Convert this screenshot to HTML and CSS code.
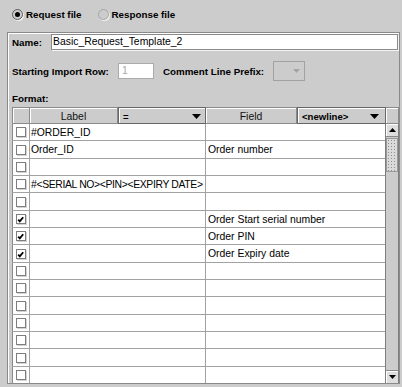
FILE: index.html
```html
<!DOCTYPE html>
<html lang="en">
<head>
    <meta charset="UTF-8">
    <title>Import Template</title>
    <link rel="stylesheet" href="styles.css">
</head>
<body>
    <div class="file-type">
        <label class="radio"><span class="radio-dot checked"></span>Request file</label>
        <label class="radio"><span class="radio-dot"></span>Response file</label>
    </div>

    <div class="panel">
        <div class="form-row name-row">
            <span class="field-label name-label">Name:</span>
            <div class="text-field name-field">Basic_Request_Template_2</div>
        </div>
        <div class="form-row import-row">
            <span class="field-label">Starting Import Row:</span>
            <div class="text-field row-field">1</div>
            <span class="field-label">Comment Line Prefix:</span>
            <div class="prefix-combo">
                <svg width="7" height="4" viewBox="0 0 7 4"><path d="M0 0h7L3.5 4z" fill="#a4a4a4"/></svg>
            </div>
        </div>
        <div class="field-label format-label">Format:</div>

        <div class="grid">
            <div class="grid-head">
                <div class="head-cell h-check"></div>
                <div class="head-cell h-label">Label</div>
                <div class="head-cell head-combo h-eq">
                    <span>=</span>
                    <svg width="9" height="5" viewBox="0 0 9 5"><path d="M0 0h9L4.5 5z"/></svg>
                </div>
                <div class="head-cell h-field">Field</div>
                <div class="head-cell head-combo h-nl">
                    <span>&lt;newline&gt;</span>
                    <svg width="9" height="5" viewBox="0 0 9 5"><path d="M0 0h9L4.5 5z"/></svg>
                </div>
                <div class="head-cell h-corner"></div>
            </div>

            <div class="grid-body">
                <div class="rows">
                    <div class="row">
                        <div class="cell check"><span class="box"></span></div>
                        <div class="cell label">#ORDER_ID</div>
                        <div class="cell field"></div>
                    </div>
                    <div class="row">
                        <div class="cell check"><span class="box"></span></div>
                        <div class="cell label">Order_ID</div>
                        <div class="cell field">Order number</div>
                    </div>
                    <div class="row">
                        <div class="cell check"><span class="box"></span></div>
                        <div class="cell label"></div>
                        <div class="cell field"></div>
                    </div>
                    <div class="row">
                        <div class="cell check"><span class="box"></span></div>
                        <div class="cell label tight">#&lt;SERIAL NO&gt;&lt;PIN&gt;&lt;EXPIRY DATE&gt;</div>
                        <div class="cell field"></div>
                    </div>
                    <div class="row">
                        <div class="cell check"><span class="box"></span></div>
                        <div class="cell label"></div>
                        <div class="cell field"></div>
                    </div>
                    <div class="row">
                        <div class="cell check"><span class="box"><svg width="8" height="8" viewBox="0 0 8 8"><path d="M1.2 4.6L2.8 6.4L6.2 2.2" fill="none" stroke="#000" stroke-width="1.8"/></svg></span></div>
                        <div class="cell label"></div>
                        <div class="cell field">Order Start serial number</div>
                    </div>
                    <div class="row">
                        <div class="cell check"><span class="box"><svg width="8" height="8" viewBox="0 0 8 8"><path d="M1.2 4.6L2.8 6.4L6.2 2.2" fill="none" stroke="#000" stroke-width="1.8"/></svg></span></div>
                        <div class="cell label"></div>
                        <div class="cell field">Order PIN</div>
                    </div>
                    <div class="row">
                        <div class="cell check"><span class="box"><svg width="8" height="8" viewBox="0 0 8 8"><path d="M1.2 4.6L2.8 6.4L6.2 2.2" fill="none" stroke="#000" stroke-width="1.8"/></svg></span></div>
                        <div class="cell label"></div>
                        <div class="cell field">Order Expiry date</div>
                    </div>
                    <div class="row">
                        <div class="cell check"><span class="box"></span></div>
                        <div class="cell label"></div>
                        <div class="cell field"></div>
                    </div>
                    <div class="row">
                        <div class="cell check"><span class="box"></span></div>
                        <div class="cell label"></div>
                        <div class="cell field"></div>
                    </div>
                    <div class="row">
                        <div class="cell check"><span class="box"></span></div>
                        <div class="cell label"></div>
                        <div class="cell field"></div>
                    </div>
                    <div class="row">
                        <div class="cell check"><span class="box"></span></div>
                        <div class="cell label"></div>
                        <div class="cell field"></div>
                    </div>
                    <div class="row">
                        <div class="cell check"><span class="box"></span></div>
                        <div class="cell label"></div>
                        <div class="cell field"></div>
                    </div>
                    <div class="row">
                        <div class="cell check"><span class="box"></span></div>
                        <div class="cell label"></div>
                        <div class="cell field"></div>
                    </div>
                    <div class="row">
                        <div class="cell check"><span class="box"></span></div>
                        <div class="cell label"></div>
                        <div class="cell field"></div>
                    </div>
                </div>

                <div class="vscroll">
                    <div class="scroll-btn up">
                        <svg width="7" height="4" viewBox="0 0 7 4"><path d="M0 4h7L3.5 0z"/></svg>
                    </div>
                    <div class="thumb"></div>
                    <div class="track"></div>
                    <div class="scroll-btn down">
                        <svg width="7" height="4" viewBox="0 0 7 4"><path d="M0 0h7L3.5 4z"/></svg>
                    </div>
                </div>
            </div>
        </div>
    </div>
</body>
</html>
```

FILE: styles.css
```css
body {
    margin: 0;
    width: 402px;
    height: 387px;
    overflow: hidden;
    background-color: #cccccc;
    font-family: "Liberation Sans", Arial, sans-serif;
    color: #000;
}

/* request / response switch */
.file-type {
    display: flex;
    align-items: center;
    height: 29px;
    padding-left: 12px;
}
.radio {
    display: flex;
    align-items: center;
    gap: 3px;
    margin-right: 16px;
    font-size: 9.8px;
    font-weight: bold;
}
.radio-dot {
    display: flex;
    align-items: center;
    justify-content: center;
    width: 11px;
    height: 11px;
    box-sizing: border-box;
    border: 1px solid #a4a4a4;
    border-radius: 50%;
    background-color: #cccccc;
    box-shadow: 1px 1px 0 #efefef;
}
.radio-dot.checked {
    border-color: #5c5c5c;
}
.radio-dot.checked::after {
    content: "";
    width: 5px;
    height: 5px;
    border-radius: 50%;
    background-color: #000;
}

/* template panel */
.panel {
    margin: 3px 2px 0 7px;
    padding: 1px 0 0 4px;
    border: 1px solid #8a8a8a;
    box-shadow: inset 1px 1px 0 #ffffff;
}
.form-row {
    display: flex;
    align-items: center;
}
.field-label {
    font-size: 9.8px;
    font-weight: bold;
    white-space: nowrap;
}
.name-row {
    height: 16px;
    margin-bottom: 11px;
}
.name-label {
    width: 39px;
}
.text-field {
    box-sizing: border-box;
    height: 16px;
    background-color: #fff;
    border: 1px solid #8a8a8a;
    font-size: 10.4px;
    line-height: 14px;
    white-space: nowrap;
}
.name-field {
    flex: 1;
    margin-right: 1px;
    padding-left: 1px;
    box-shadow: 1px 1px 0 #f4f4f4;
}
.import-row {
    height: 20px;
    margin-bottom: 12px;
}
.row-field {
    width: 36px;
    margin: 0 9px;
    padding-left: 3px;
    border-color: #ababab;
    color: #a8a8a8;
}
.prefix-combo {
    display: flex;
    align-items: center;
    justify-content: flex-end;
    box-sizing: border-box;
    width: 32px;
    height: 20px;
    margin-left: 9px;
    padding-right: 4px;
    border: 1px solid #a2a2a2;
}
.format-label {
    line-height: 12px;
    margin-bottom: 2px;
}

/* format table */
.grid {
    width: 387px;
}
.grid-head {
    display: flex;
    height: 17px;
}
.head-cell {
    display: flex;
    align-items: center;
    justify-content: center;
    box-sizing: border-box;
    height: 17px;
    padding-top: 2px;
    background-color: #cccccc;
    border-top: 1px solid #8a8a8a;
    border-right: 1px solid #8a8a8a;
    border-bottom: 1px solid #8a8a8a;
    box-shadow: inset 1px 1px 0 #ffffff;
    font-size: 10.4px;
    color: #111;
}
.h-check { width: 18px; border-left: 1px solid #8a8a8a; }
.h-label { width: 88px; }
.h-eq { width: 88px; }
.h-field { width: 91px; }
.h-nl { width: 89px; }
.h-corner { width: 13px; }
.head-combo {
    justify-content: space-between;
    padding: 1px 4px 0 4px;
    border: 1px solid #666;
    font-weight: bold;
    font-size: 9.6px;
    color: #000;
}
.h-nl {
    padding-right: 6px;
}

.grid-body {
    display: flex;
    height: 259px;
    overflow: hidden;
}
.rows {
    width: 373px;
    background-color: #fff;
}
.row {
    display: grid;
    grid-template-columns: 18px 176px 179px;
    box-sizing: border-box;
    height: 17.35px;
    border-bottom: 1px solid #a2a2a2;
}
.cell {
    box-sizing: border-box;
    border-right: 1px solid #a2a2a2;
    font-size: 10.4px;
    line-height: 17px;
    white-space: nowrap;
    overflow: hidden;
    color: #000;
}
.cell.check {
    display: flex;
    align-items: center;
    justify-content: center;
    border-left: 1px solid #8a8a8a;
}
.cell.label {
    padding-left: 1px;
}
.cell.field {
    padding-left: 2px;
    border-right: none;
}
.tight {
    letter-spacing: -0.35px;
}
.box {
    display: flex;
    align-items: flex-end;
    justify-content: flex-start;
    box-sizing: border-box;
    width: 10px;
    height: 10px;
    border: 1px solid #7e7e7e;
    background-color: #fff;
    box-shadow: 1px 1px 0 #d2d2d2;
}

/* vertical scrollbar */
.vscroll {
    display: flex;
    flex-direction: column;
    box-sizing: border-box;
    width: 14px;
    border-left: 1px solid #7e7e7e;
    border-right: 1px solid #7e7e7e;
    background-color: #cccccc;
}
.scroll-btn {
    display: flex;
    align-items: center;
    justify-content: center;
    box-sizing: border-box;
    height: 13px;
    background-color: #dedede;
    box-shadow: inset 1px 1px 0 #ffffff;
}
.scroll-btn.up {
    border-bottom: 1px solid #8a8a8a;
}
.scroll-btn.down {
    border-top: 1px solid #8a8a8a;
}
.thumb {
    height: 34px;
    margin-top: 1px;
    box-sizing: border-box;
    border: 1px solid #9a9a9a;
    background-color: #dadada;
    background-image: radial-gradient(circle, #8f8f8f 0.7px, transparent 0.9px);
    background-size: 3px 3px;
}
.track {
    flex: 1;
}
```
